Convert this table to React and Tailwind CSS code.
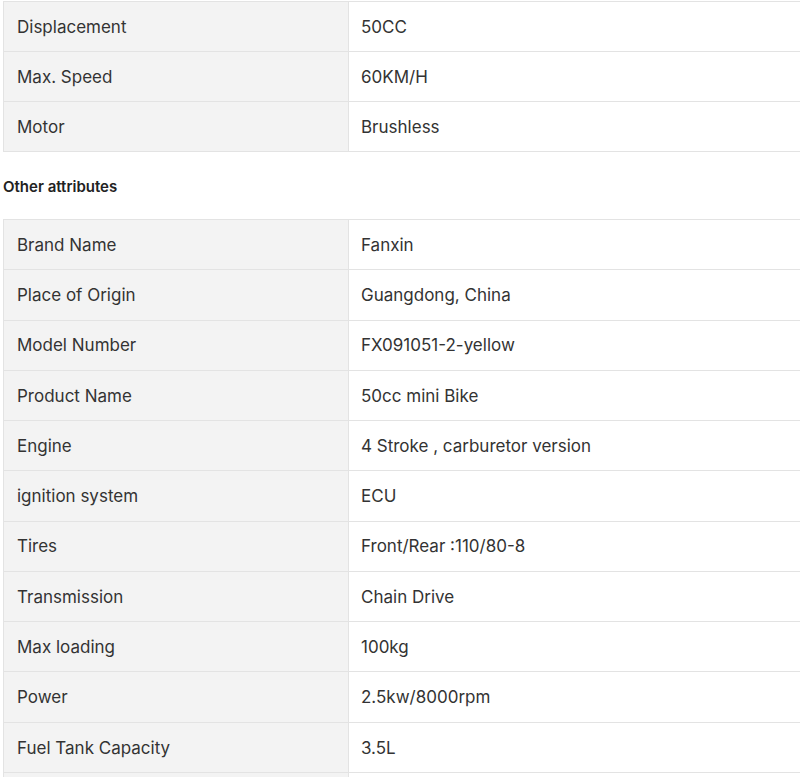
import React from 'react'

const keyAttrs = [
    ['Displacement', '50CC'],
    ['Max. Speed', '60KM/H'],
    ['Motor', 'Brushless'],
];

const otherAttrs = [
    ['Brand Name', 'Fanxin'],
    ['Place of Origin', 'Guangdong, China'],
    ['Model Number', 'FX091051-2-yellow'],
    ['Product Name', '50cc mini Bike'],
    ['Engine', '4 Stroke , carburetor version'],
    ['ignition system', 'ECU'],
    ['Tires', 'Front/Rear :110/80-8'],
    ['Transmission', 'Chain Drive'],
    ['Max loading', '100kg'],
    ['Power', '2.5kw/8000rpm'],
    ['Fuel Tank Capacity', '3.5L'],
    ['', ''],
];

const AttrTable = ({ rows, rowClass }) => {
    return (
        <table className="w-[820px] border-collapse table-fixed">
            <tbody>
                {rows.map(([name, value], i) => (
                    <tr key={i} className={rowClass}>
                        <td className="w-[345px] bg-[#f3f3f3] border border-[#e3e3e3] pl-[13px] pt-[2px] text-[17px] text-[#333333]">{name}</td>
                        <td className="border border-[#e3e3e3] pl-[12px] pt-[2px] text-[17px] text-[#333333]">{value}</td>
                    </tr>
                ))}
            </tbody>
        </table>
    );
}

const App = () => {
    return (
        <div className="w-[800px] h-[777px] overflow-hidden bg-white pl-[3px] pt-px font-['Inter','Noto_Sans',sans-serif]">
            <AttrTable rows={keyAttrs} rowClass="h-[50px]" />

            {/* other attributes */}
            <h3 className="mt-[26px] mb-[23px] text-[15px] font-semibold text-[#222222] leading-[18px]">Other attributes</h3>

            <AttrTable rows={otherAttrs} rowClass="h-[50.27px]" />
        </div>
    );
}
export default App;
